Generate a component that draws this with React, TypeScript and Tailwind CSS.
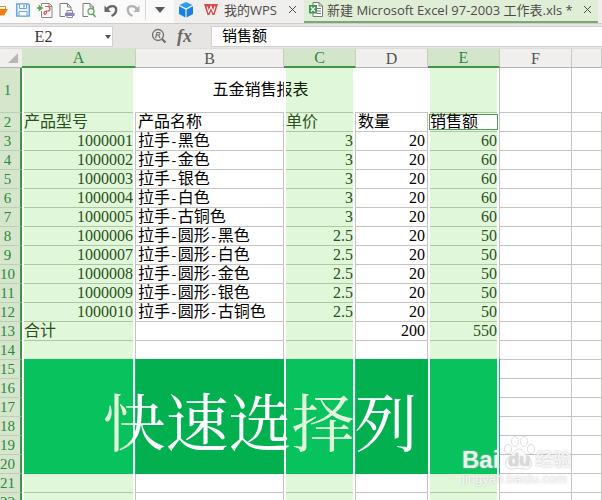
import { Fragment, ReactNode } from "react";
import clsx from "clsx";

const columns = ["A", "B", "C", "D", "E", "F", "G"];
const selected = ["A", "C", "E"];

const items = [
  ["1000001", "拉手-黑色", "3", "20", "60"],
  ["1000002", "拉手-金色", "3", "20", "60"],
  ["1000003", "拉手-银色", "3", "20", "60"],
  ["1000004", "拉手-白色", "3", "20", "60"],
  ["1000005", "拉手-古铜色", "3", "20", "60"],
  ["1000006", "拉手-圆形-黑色", "2.5", "20", "50"],
  ["1000007", "拉手-圆形-白色", "2.5", "20", "50"],
  ["1000008", "拉手-圆形-金色", "2.5", "20", "50"],
  ["1000009", "拉手-圆形-银色", "2.5", "20", "50"],
  ["1000010", "拉手-圆形-古铜色", "2.5", "20", "50"],
];

const rows: string[][] = [
  ["产品型号", "产品名称", "单价", "数量", "销售额"],
  ...items,
  ["合计", "", "", "200", "550"],
  ...Array.from({ length: 9 }, () => []),
];

const song = "font-['Liberation_Serif','Noto_Sans_CJK_SC',serif]";

function Tool({ label, children }: { label: string; children: ReactNode }) {
  return (
    <button type="button" aria-label={label} className="size-4 shrink-0">
      <svg viewBox="0 0 16 16" className="size-4" fill="none">
        {children}
      </svg>
    </button>
  );
}

function Toolbar() {
  return (
    <div className="flex h-full shrink-0 items-center bg-[#fbfafa] pb-1">
      <svg viewBox="0 0 9 16" className="h-4 w-[9px] shrink-0" fill="none">
        <path d="M0 4.500h5.500V8" stroke="#e58a2c" strokeWidth="1" />
        <path d="M0 7h8L4 13.500H0z" fill="#f57c12" />
      </svg>
      <div className="ml-1.5 flex items-center gap-[6px]">
        <Tool label="保存">
          <path d="M1.700 2h11.600l1 1v11H1.700z" fill="#e9f3fd" stroke="#6ba6de" strokeWidth="1.500" />
          <path d="M4.500 2h7v4.500h-7zM4 9.500h8V14H4z" fill="#fff" stroke="#6ba6de" />
          <path d="M9 3v2.500" stroke="#6ba6de" strokeWidth="1.500" />
        </Tool>
        <Tool label="输出为PDF">
          <path d="M4.500 4V1.500h8L15 4v11.500H4.500V9" stroke="#8b8585" />
          <path d="M12 1.500V4.500h3" stroke="#8b8585" />
          <path d="M0 6h2M2.500 4 5 6 2.500 8z" stroke="#5aa552" fill="#5aa552" strokeWidth="1.500" />
          <path d="M8 4.500h2.500c2 0 2.500 1 2.500 2.200s-1 2.300-2.500 2.300H9.500v1.500c0 2-2.500 2.500-2.500.8S8.500 9 10 9" stroke="#d65a54" strokeWidth="1.200" />
        </Tool>
        <Tool label="打印">
          <path d="M6 14.500H1V1.500h7.500L12 5v3" stroke="#807a80" />
          <path d="M8.500 1.500V5H12" stroke="#807a80" />
          <path d="M6 11h9.500v3H6z" fill="#8f86b5" />
          <path d="M8 8.500h5.500V11H8zM8 13.500h5.500v2H8z" fill="#fff" stroke="#8f86b5" />
        </Tool>
        <Tool label="打印预览">
          <path d="M7 14.500H2V1.500h7L12.500 5v3" stroke="#807a80" />
          <path d="M9 1.500V5h3.500" stroke="#807a80" />
          <circle cx="10" cy="9.500" r="3" fill="#fff" stroke="#65ab63" strokeWidth="1.300" />
          <path d="m12 12 2.500 3" stroke="#65ab63" strokeWidth="1.800" />
        </Tool>
        <Tool label="撤销">
          <path d="M4 7.500C6 3 13 3 13.200 7.500c0 3.500-2.200 5.500-4.700 6.500" stroke="#6b6864" strokeWidth="2.400" />
          <path d="M1.500 3.500V10H8z" fill="#6b6864" />
        </Tool>
        <Tool label="恢复">
          <path d="M12 7.500C10 3 3 3 2.800 7.500c0 3.500 2.200 5.500 4.700 6.500" stroke="#b5b3b1" strokeWidth="2.400" />
          <path d="M14.500 3.500V10H8z" fill="#b5b3b1" />
        </Tool>
      </div>
      <div className="ml-1 h-5 w-px bg-[#d9d7d6]" />
      <button type="button" aria-label="自定义快速访问工具栏" className="flex w-7 justify-center">
        <svg viewBox="0 0 10 6" className="h-1.5 w-2.5">
          <path d="M0 0h10L5 6z" fill="#5c5856" />
        </svg>
      </button>
    </div>
  );
}

function Close({ label }: { label: string }) {
  return (
    <button type="button" aria-label={label} className="shrink-0">
      <svg viewBox="0 0 9 9" className="size-[9px]">
        <path d="m1 1 7 7M8 1 1 8" stroke="#4c4a48" strokeWidth="1" />
      </svg>
    </button>
  );
}

function Tabs() {
  return (
    <header className="flex h-6 shrink-0 border-b border-[#cfcecc] bg-[#f0efee] font-['Open_Sans','Noto_Sans_CJK_SC',sans-serif] text-[13px] leading-5 text-[#4d4b49]">
      <Toolbar />
      <div className="flex min-w-0 flex-1">
        <div className="flex shrink-0 items-center pb-1 pl-1">
          <svg viewBox="0 0 16 18" className="h-[18px] w-4">
            <path d="m8 1 6.500 3L8 7.300 1.500 4z" fill="#2d9bf0" />
            <path d="M1 5.300 7.400 8.500v8L1 13zM15 5.300 8.600 8.500v8L15 13z" fill="#1682e6" />
          </svg>
          <svg viewBox="0 0 14 13" className="ml-2.5 h-[13px] w-3.5" fill="none">
            <path d="M0 1h14l-3.500 11h-2L7 8l-1.500 4h-2z" fill="#dc4a45" />
            <path d="M3 3.500 4.700 9 7 3.500 9.300 9 11 3.500" stroke="#fff" strokeWidth="1.100" />
          </svg>
          <a href="#home" className="ml-1.5 w-14 whitespace-nowrap">我的WPS</a>
          <div className="ml-2 flex"><Close label="关闭 我的WPS" /></div>
        </div>
        <div className="ml-[7px] flex min-w-0 items-center border-b-2 border-[#74ac72] bg-[#e0eed7] pr-1.5 pb-0.5 pl-1">
          <svg viewBox="0 0 15 15" className="size-[15px] shrink-0" fill="none">
            <path d="M5 .500h6L14.500 4v10.500H5z" fill="#fff" stroke="#77787a" />
            <path d="M11 .500V4h3.500M9 6.500h4M9 9h4M9 11.500h4" stroke="#77787a" />
            <path d="M1 3h8v8.500H1z" fill="#3f9b52" />
            <path d="m3 5 4 4.500M7 5 3 9.500" stroke="#fff" strokeWidth="1.300" />
          </svg>
          <a href="#sheet" className="ml-1 w-[248px] whitespace-nowrap">新建 Microsoft Excel 97-2003 工作表.xls *</a>
          <div className="ml-2 flex"><Close label="关闭 工作表" /></div>
        </div>
      </div>
    </header>
  );
}

function FormulaBar() {
  return (
    <div className={clsx("flex h-[25px] shrink-0 items-start border-b border-[#dddcda] bg-[#e6e5e4] pt-0.5", song)}>
      <div className="flex h-[21px] w-[113px] shrink-0 items-center border border-l-0 border-[#d2d1d0] bg-white">
        <input aria-label="名称框" defaultValue="E2" className="w-[87px] bg-transparent text-center text-base text-[#333] outline-none" />
        <button type="button" aria-label="名称列表" className="flex w-[25px] justify-center pl-4">
          <svg viewBox="0 0 6 4" className="h-1 w-1.5 shrink-0">
            <path d="M0 0h6L3 4z" fill="#55504d" />
          </svg>
        </button>
      </div>
      <div className="flex w-[98px] shrink-0 items-center pl-[38px]">
        <svg viewBox="0 0 16 16" className="size-4" fill="none">
          <circle cx="7" cy="7" r="5.500" stroke="#716d6a" strokeWidth="1.300" />
          <path d="m11 11 3.500 3.500" stroke="#716d6a" strokeWidth="2.200" />
          <path d="M4.500 10 6 4.500h2c1.500 0 1.500 2.500-1 2.500H6M7.500 7l1.500 3" stroke="#716d6a" strokeWidth="1.100" />
        </svg>
        <button type="button" aria-label="插入函数" className="ml-2.5 text-lg leading-5 font-bold text-[#6c6865] italic">fx</button>
      </div>
      <input aria-label="编辑栏" defaultValue="销售额" className="h-[21px] min-w-0 flex-1 border border-r-0 border-[#d2d1d0] bg-white pl-2.5 text-[15px] text-black outline-none" />
    </div>
  );
}

// Hyphens take half of a full-width character
function CellText({ text }: { text: string }) {
  return text.split("-").map((part, i) => (
    <Fragment key={i}>
      {i > 0 && <span className="font-['Liberation_Mono',monospace] text-[13px] leading-none">-</span>}
      {part}
    </Fragment>
  ));
}

function RowHead({ n }: { n: number }) {
  return (
    <th scope="row" className="border-r-2 border-b border-r-[#3f9448] border-b-[#c0cdb8] bg-[#d6e6cc] p-0 text-[15px] font-normal text-[#2c8740]">
      <div className="flex w-[15px] justify-center">{n}</div>
    </th>
  );
}

function Grid() {
  return (
    <table className="w-full table-fixed border-separate border-spacing-0 text-base leading-[18px] text-black">
      <colgroup>
        <col className="w-[22px]" />
        <col className="w-[114px]" />
        <col className="w-[148px]" />
        <col className="w-[72px]" />
        <col className="w-[72px]" />
        <col className="w-[72px]" />
        <col className="w-[72px]" />
        <col />
      </colgroup>
      <thead>
        <tr className="h-[19px]">
          <td className="border-b border-[#b5b4b2] bg-[#f0efee] p-0">
            <svg viewBox="0 0 10 10" className="ml-2 size-2.5">
              <path d="M10 0v10H0z" fill="#b9b7b5" />
            </svg>
          </td>
          {columns.map((c) => (
            <th
              key={c}
              scope="col"
              className={clsx(
                "border-r p-0 text-center leading-[17px] font-normal",
                selected.includes(c)
                  ? "border-b-2 border-r-[#c4d2bc] border-b-[#3f9448] bg-[#d4e6ca] text-[#2c8740]"
                  : "border-b border-r-[#c9c8c6] border-b-[#b5b4b2] bg-[#f0efee] text-[#555]",
              )}
            >
              {c === "G" ? "" : c}
            </th>
          ))}
        </tr>
      </thead>
      <tbody>
        <tr className="h-[45px]">
          <RowHead n={1} />
          <td colSpan={5} className="border-r border-b border-[#c5c4c0] p-0 text-center">五金销售报表</td>
          <td className="border-r border-b border-[#c5c4c0]" />
          <td className="border-b border-[#c5c4c0]" />
        </tr>
        {rows.map((row, r) => (
          <tr key={r} className="h-[19px]">
            <RowHead n={r + 2} />
            {columns.map((c, i) => {
              const active = r === 0 && c === "E";
              return (
                <td
                  key={c}
                  className={clsx(
                    "border-r border-b border-[#c5c4c0] whitespace-nowrap",
                    active ? "p-0" : "px-0.5 py-0",
                    selected.includes(c) && !active && "text-[#2a3a28]",
                    r > 0 && /^[\d.]+$/.test(row[i] ?? "") && "text-right",
                  )}
                >
                  {active ? (
                    <div className="relative z-10 mx-px h-4 border border-[#4f9a5a] bg-white leading-[14px]">{row[i]}</div>
                  ) : (
                    <CellText text={row[i] ?? ""} />
                  )}
                </td>
              );
            })}
          </tr>
        ))}
      </tbody>
    </table>
  );
}

function Banner() {
  return (
    <div className="absolute top-[310px] left-6 flex h-[115px] w-[476px]">
      <div className="w-28 bg-[#00c16e]" />
      <div className="w-[148px] bg-[#02b050]" />
      <div className="w-[72px] bg-[#00c16e]" />
      <div className="w-[72px] bg-[#02b050]" />
      <div className="w-[72px] bg-[#00c16e]" />
      <p className="absolute inset-0 pr-1 text-center font-['Noto_Serif_CJK_SC','Noto_Sans_CJK_SC',serif] text-[63px] leading-[120px] font-normal text-white">快速选择列</p>
    </div>
  );
}

function Selection() {
  return (
    <div className="pointer-events-none absolute inset-0 top-[19px] grid grid-cols-[22px_114px_148px_72px_72px_72px]">
      {["", ...columns.slice(0, 5)].map((c) => (
        <div key={c} className={clsx(selected.includes(c) && "mr-px border-x-2 border-white bg-[#37ca00]/15 bg-clip-padding")} />
      ))}
    </div>
  );
}

function Watermark() {
  return (
    <div className="absolute top-[387px] left-[462px] font-['Liberation_Sans','Noto_Sans_CJK_SC',sans-serif] text-white/80 [text-shadow:0_0_2px_#bbbbbb]">
      <div className="flex h-[34px] items-end">
        <span className="text-2xl leading-5 font-bold">Bai</span>
        <div className="relative ml-1 flex h-[34px] w-8 items-end justify-center">
          <svg viewBox="0 0 32 34" className="absolute inset-0 size-full" fill="#ffffff" fillOpacity=".85" stroke="#dedede">
            <ellipse cx="5" cy="13" rx="3.500" ry="4.500" />
            <ellipse cx="12" cy="5.500" rx="3.500" ry="5" />
            <ellipse cx="21" cy="5.500" rx="3.500" ry="5" />
            <ellipse cx="28" cy="13" rx="3.500" ry="4.500" />
            <path d="M16 13c5 0 6 6 10 9 5 5 2 12-4 11-4-1-8-1-12 0-7 1-10-6-5-11 4-3 6-9 11-9z" />
          </svg>
          <span className="relative text-lg leading-5 font-bold text-[#dadada]">du</span>
        </div>
        <span className="text-lg leading-5 font-bold">经验</span>
      </div>
      <p className="text-[13px] leading-[18px]">jingyan.baidu.com</p>
    </div>
  );
}

export default function App() {
  return (
    <main className="flex h-screen flex-col overflow-hidden bg-white">
      <Tabs />
      <FormulaBar />
      <section className={clsx("relative min-h-0 flex-1 overflow-hidden", song)}>
        <Grid />
        <Banner />
        <Selection />
        <Watermark />
      </section>
    </main>
  );
}
